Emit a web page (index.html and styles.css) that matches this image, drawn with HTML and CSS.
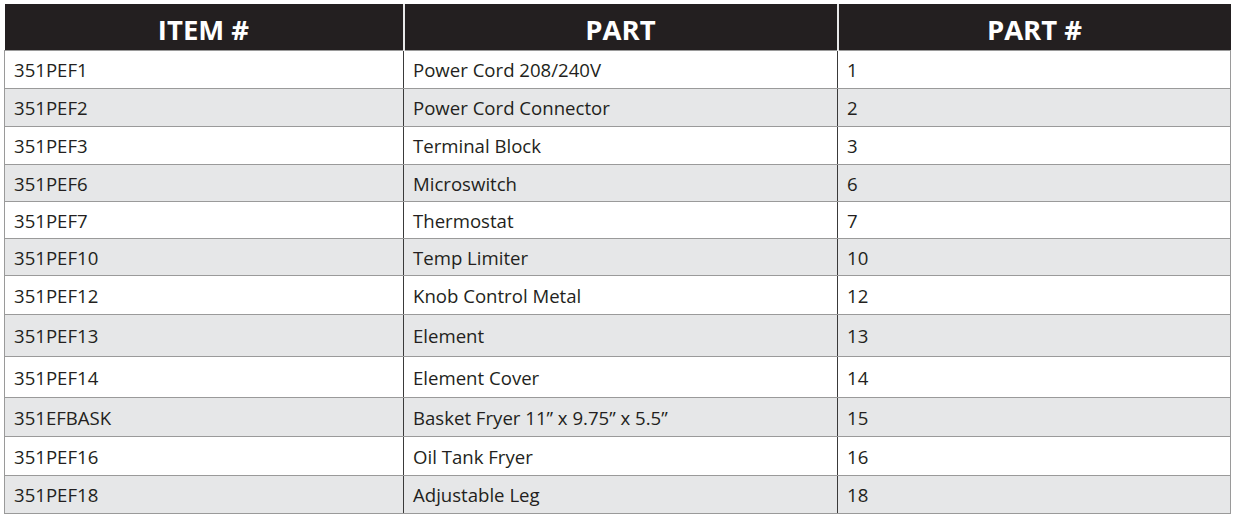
FILE: index.html
```html
<!DOCTYPE html>
<html>
<head>
<meta charset="utf-8">
<link rel="stylesheet" href="styles.css">
</head>
<body>
<table class="parts">
  <colgroup><col class="c1"><col class="c2"><col class="c3"></colgroup>
  <thead>
    <tr><th>ITEM #</th><th>PART</th><th>PART #</th></tr>
  </thead>
  <tbody>
    <tr class="h38"><td>351PEF1</td><td>Power Cord 208/240V</td><td>1</td></tr>
    <tr class="h38"><td>351PEF2</td><td>Power Cord Connector</td><td>2</td></tr>
    <tr class="h38"><td>351PEF3</td><td>Terminal Block</td><td>3</td></tr>
    <tr class="h37"><td>351PEF6</td><td>Microswitch</td><td>6</td></tr>
    <tr class="h37"><td>351PEF7</td><td>Thermostat</td><td>7</td></tr>
    <tr class="h37"><td>351PEF10</td><td>Temp Limiter</td><td>10</td></tr>
    <tr class="h39"><td>351PEF12</td><td>Knob Control Metal</td><td>12</td></tr>
    <tr class="h42"><td>351PEF13</td><td>Element</td><td>13</td></tr>
    <tr class="h41"><td>351PEF14</td><td>Element Cover</td><td>14</td></tr>
    <tr class="h39"><td>351EFBASK</td><td>Basket Fryer 11” x 9.75” x 5.5”</td><td>15</td></tr>
    <tr class="h39"><td>351PEF16</td><td>Oil Tank Fryer</td><td>16</td></tr>
    <tr class="h38"><td>351PEF18</td><td>Adjustable Leg</td><td>18</td></tr>
  </tbody>
</table>
</body>
</html>
```
FILE: styles.css
```css
html, body {
  margin: 0;
  padding: 0;
  background: #ffffff;
}
body {
  padding: 4px 0 0 4px;
  font-family: "Open Sans", "Liberation Sans", sans-serif;
  color: #231f20;
}
.parts {
  border-collapse: collapse;
  table-layout: fixed;
  width: 1226px;
}
.c1 { width: 399px; }
.c2 { width: 434px; }
.c3 { width: 393px; }
.parts th {
  background: #231f20;
  color: #ffffff;
  font-weight: 700;
  font-size: 27.5px;
  height: 40px;
  padding: 6px 0 0 0;
  text-align: center;
  vertical-align: middle;
  border-left: 2px solid #e8e8e8;
  line-height: 1;
}
.parts th:first-child { border-left: none; }
.parts td {
  font-size: 18.6px;
  padding: 2px 0 0 9px;
  vertical-align: middle;
  border-top: 1px solid #9a9a9a;
  border-bottom: 1px solid #9a9a9a;
  border-left: 1px solid #3a3a3a;
  line-height: 1;
}
.parts td:first-child { border-left: 1px solid #9a9a9a; }
.parts td:last-child { border-right: 1px solid #9a9a9a; }
.parts tbody tr:nth-child(even) td { background: #e6e7e8; }
.h37 { height: 37px; }
.h38 { height: 38px; }
.h39 { height: 39px; }
.h41 { height: 41px; }
.h42 { height: 42px; }
```
